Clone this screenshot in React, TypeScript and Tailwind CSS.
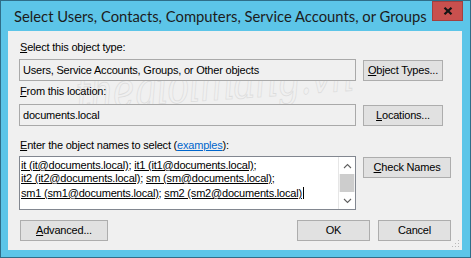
const ui = "font-['Liberation_Sans',Arial,sans-serif] text-[11px] leading-[13px] tracking-[-0.2px] text-black";
const boxCls = "flex h-[22px] items-center border border-[#a9a9a9] bg-[#f0f0f0] px-[3px]";
const btnCls =
  "flex h-[21px] items-center justify-center border border-[#adadad] bg-[#e1e1e1] text-[11px] text-black";

function Key({ k }: { k: string }) {
  return <span className="underline">{k}</span>;
}

function Names({ items, last }: { items: string[]; last?: boolean }) {
  return (
    <div className="whitespace-nowrap">
      {items.map((n, i) => (
        <span key={n}>
          <span className="underline">{n}</span>
          {i < items.length - 1 || !last ? "; " : ""}
        </span>
      ))}
      {last && <span className="ml-[1px] inline-block h-[12px] w-px translate-y-[2px] bg-black" />}
    </div>
  );
}

function Chevron({ up }: { up?: boolean }) {
  return (
    <svg width="9" height="6" viewBox="0 0 9 6">
      <path
        d={up ? "M1 5 L4.5 1.5 L8 5" : "M1 1 L4.5 4.5 L8 1"}
        fill="none"
        stroke="#606060"
        strokeWidth="1.1"
      />
    </svg>
  );
}

export default function App() {
  return (
    <div className="h-[258px] w-[471px] overflow-hidden border border-[#2f6d88] bg-[#5cc5e8]">
      {/* title bar */}
      <div className="flex h-[30px] items-start justify-between pl-[13px] pr-[7px]">
        <div className="whitespace-nowrap pt-[5px] font-['Lato','Noto_Sans',sans-serif] text-[14.8px] leading-[20px] text-[#1c1c1c]">
          Select Users, Contacts, Computers, Service Accounts, or Groups
        </div>
        <div className="flex h-[20px] w-[31px] shrink-0 items-center justify-center border border-[#a33f3f] bg-[#c9504e]">
          <svg width="10" height="8" viewBox="0 0 10 8">
            <path d="M1.5 0.8 L8.5 7.2 M8.5 0.8 L1.5 7.2" stroke="#151515" strokeWidth="2.2" />
          </svg>
        </div>
      </div>

      {/* client */}
      <div className={`relative ml-[7px] h-[219px] w-[454px] bg-[#f0f0f0] px-[11px] pt-[10px] ${ui}`}>
        {/* watermark */}
        <div className="pointer-events-none absolute left-[68px] top-[44px] origin-left font-['DejaVu_Serif',serif] text-[37px] italic leading-none tracking-[-1px] text-transparent [-webkit-text-stroke:0.6px_#dcdcdc] [transform:rotate(-4deg)_scaleY(1.3)]">
          thegioimang.vn
        </div>

        <div className="relative pl-[1px]">
          <Key k="S" />elect this object type:
        </div>
        <div className="relative mt-[5px] flex items-end gap-[7px]">
          <div className={`${boxCls} flex-1`}>Users, Service Accounts, Groups, or Other objects</div>
          <div className="w-[88px]">
            <div className={`${btnCls} w-[80px]`}>
              <Key k="O" />bject Types...
            </div>
          </div>
        </div>

        <div className="relative mt-[4px] pl-[1px]">
          <Key k="F" />rom this location:
        </div>
        <div className="relative mt-[6px] flex items-end gap-[7px]">
          <div className={`${boxCls} flex-1 px-[2px]`}>documents.local</div>
          <div className="w-[88px]">
            <div className={`${btnCls} w-[80px]`}>
              <Key k="L" />ocations...
            </div>
          </div>
        </div>

        <div className="relative mt-[13px] pl-[1px]">
          <Key k="E" />nter the object names to select (
          <span className="text-[#0066cc] underline">examples</span>):
        </div>
        <div className="relative mt-[4px] flex items-start gap-[7px]">
          <div className="flex h-[54px] flex-1 border border-[#828790] bg-white">
            <div className="flex-1 overflow-hidden pl-[1px] pt-[2px]">
              <Names items={["it (it@documents.local)", "it1 (it1@documents.local)"]} />
              <Names items={["it2 (it2@documents.local)", "sm (sm@documents.local)"]} />
              <Names items={["sm1 (sm1@documents.local)", "sm2 (sm2@documents.local)"]} last />
            </div>
            <div className="flex w-[17px] flex-col border-l border-[#e6e6e6] bg-[#f0f0f0]">
              <div className="flex h-[17px] items-center justify-center bg-white">
                <Chevron up />
              </div>
              <div className="mx-[1px] h-[18px] bg-[#cdcdcd]" />
              <div className="flex flex-1 items-center justify-center bg-white">
                <Chevron />
              </div>
            </div>
          </div>
          <div className={`${btnCls} mt-[1px] w-[88px]`}>
            <Key k="C" />heck Names
          </div>
        </div>

        <div className="relative mt-[10px] flex items-center">
          <div className={`${btnCls} ml-[1px] w-[88px]`}>
            <Key k="A" />dvanced...
          </div>
          <div className="flex-1" />
          <div className={`${btnCls} w-[73px]`}>OK</div>
          <div className={`${btnCls} ml-[8px] w-[73px]`}>Cancel</div>
        </div>

        {/* size grip */}
        <svg className="absolute bottom-[2px] right-[2px]" width="9" height="9" viewBox="0 0 9 9">
          {[
            [7, 1],
            [7, 4],
            [4, 4],
            [7, 7],
            [4, 7],
            [1, 7],
          ].map(([x, y]) => (
            <rect key={`${x}-${y}`} x={x} y={y} width="1" height="1" fill="#b8b8b8" />
          ))}
        </svg>
      </div>
    </div>
  );
}
